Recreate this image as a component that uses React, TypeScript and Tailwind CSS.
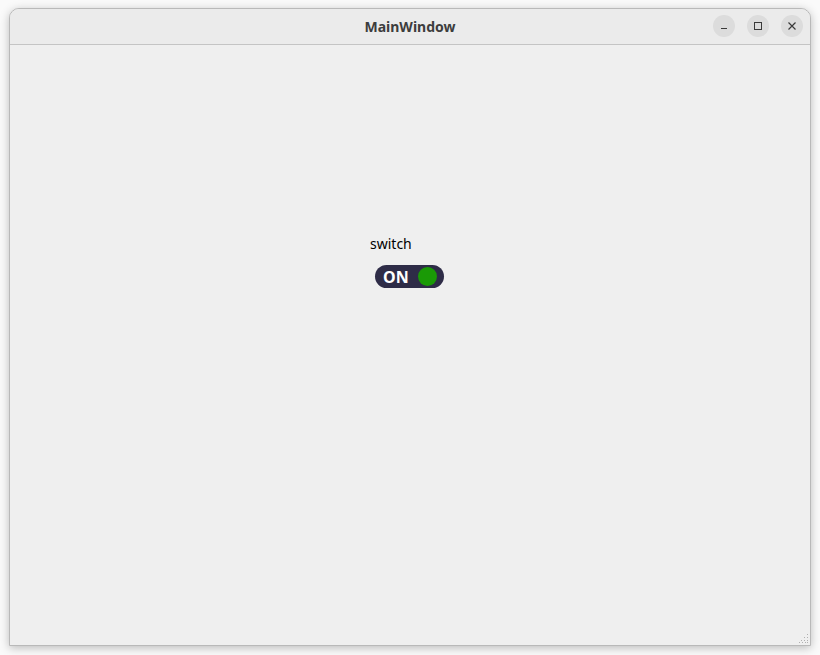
export default function App() {
  return (
    <div
      className="w-[820px] h-[655px] bg-[#fafafa] pt-2 pl-[9px]"
      style={{ fontFamily: '"Noto Sans", "DejaVu Sans", sans-serif' }}
    >
      <div className="w-[802px] h-[638px] rounded-t-[10px] border border-[#b9b9b9] bg-[#efefef] flex flex-col overflow-hidden shadow-[0_2px_10px_rgba(0,0,0,0.25)]">
        {/* title bar */}
        <div className="h-[36px] shrink-0 bg-[#ebebeb] border-b border-[#c4c4c4] relative flex items-center justify-center">
          <span className="text-[14px] font-bold text-[#3d3d3d]">MainWindow</span>
          <div className="absolute right-[7px] top-[6px] flex gap-[12px]">
            <button className="w-[22px] h-[22px] rounded-full bg-[#dcdcdc] flex items-center justify-center">
              <svg width="10" height="10" viewBox="0 0 10 10">
                <path d="M2 7.5h6" stroke="#3a3a3a" strokeWidth="1" />
              </svg>
            </button>
            <button className="w-[22px] h-[22px] rounded-full bg-[#dcdcdc] flex items-center justify-center">
              <svg width="10" height="10" viewBox="0 0 10 10">
                <rect x="1.5" y="1.5" width="7" height="7" fill="none" stroke="#3a3a3a" strokeWidth="1" />
              </svg>
            </button>
            <button className="w-[22px] h-[22px] rounded-full bg-[#dcdcdc] flex items-center justify-center">
              <svg width="10" height="10" viewBox="0 0 10 10">
                <path d="M1.5 1.5l7 7M8.5 1.5l-7 7" stroke="#3a3a3a" strokeWidth="1.2" />
              </svg>
            </button>
          </div>
        </div>

        {/* content */}
        <div className="flex-1 relative">
          <div className="pl-[360px] pt-[192px] flex flex-col">
            <span className="text-[14px] text-black leading-none">switch</span>
            <div className="mt-[14px] ml-[5px] w-[69px] h-[23px] rounded-full bg-[#2e2c47] flex items-center justify-between pl-[8px] pr-[7px]">
              <span className="text-[16px] font-bold text-white leading-none">ON</span>
              <span className="w-[19px] h-[19px] rounded-full bg-[#1a9a06]" />
            </div>
          </div>
          <svg className="absolute right-[1px] bottom-[1px]" width="10" height="10" viewBox="0 0 10 10">
            <g fill="#b0b0b0">
              <rect x="8" y="0" width="1" height="1" />
              <rect x="5" y="3" width="1" height="1" />
              <rect x="8" y="3" width="1" height="1" />
              <rect x="2" y="6" width="1" height="1" />
              <rect x="5" y="6" width="1" height="1" />
              <rect x="8" y="6" width="1" height="1" />
              <rect x="0" y="8" width="1" height="1" />
              <rect x="3" y="8" width="1" height="1" />
              <rect x="6" y="8" width="1" height="1" />
              <rect x="8" y="8" width="1" height="1" />
            </g>
          </svg>
        </div>
      </div>
    </div>
  );
}
